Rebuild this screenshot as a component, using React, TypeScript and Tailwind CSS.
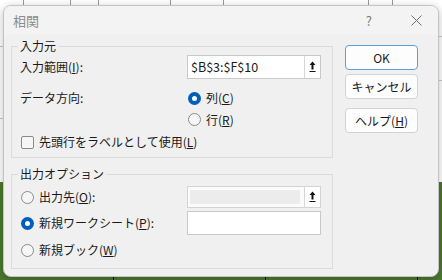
import React from "react";

const font = { fontFamily: '"Noto Sans CJK JP", "Noto Sans", sans-serif' };

function Radio({ checked }: { checked?: boolean }) {
  return checked ? (
    <span className="flex h-[13px] w-[13px] shrink-0 items-center justify-center rounded-full bg-[#005fb8]">
      <span className="h-[5px] w-[5px] rounded-full bg-white" />
    </span>
  ) : (
    <span className="h-[13px] w-[13px] shrink-0 rounded-full border border-[#8a8a8a] bg-[#f6f6f6]" />
  );
}

function RefButton() {
  return (
    <span className="flex h-full w-[16px] items-center justify-center border-l border-[#d6d6d6] bg-white">
      <svg width="7" height="12" viewBox="0 0 7 12">
        <path d="M3.5 0.5 L6.5 4 L4.5 4 L4.5 8.5 L2.5 8.5 L2.5 4 L0.5 4 Z" fill="#111" />
        <rect x="0.5" y="10" width="6" height="1" fill="#111" />
      </svg>
    </span>
  );
}

function Group({ title, height, children }: { title: string; height: number; children: React.ReactNode }) {
  return (
    <div
      className="relative box-border w-[322px] border border-[#dcdcdc]"
      style={{ height }}
    >
      <span className="absolute left-[6px] top-[-9px] bg-[#f0f0f0] px-[2px] text-[12px] leading-[16px] text-[#1a1a1a]">
        {title}
      </span>
      {children}
    </div>
  );
}

function Btn({ children, primary }: { children: React.ReactNode; primary?: boolean }) {
  return (
    <div
      className={
        "flex h-[25px] w-[73px] items-center justify-center rounded-[4px] border bg-[#fdfdfd] text-[12px] text-[#1a1a1a] " +
        (primary ? "border-[#5c9ee0]" : "border-[#d3d3d3]")
      }
    >
      {children}
    </div>
  );
}

export default function App() {
  return (
    <div className="relative h-[280px] w-[442px] overflow-hidden bg-white" style={font}>
      {/* excel behind */}
      <div className="absolute left-0 top-[182px] h-[98px] w-full bg-[#4b792d]" />
      <div className="absolute left-0 top-[46px] h-px w-[4px] bg-[#c8c8c8]" />
      <div className="absolute left-0 top-[118px] h-px w-[4px] bg-[#c8c8c8]" />
      <div className="absolute left-[439px] top-[36px] h-px w-[3px] bg-[#c8c8c8]" />
      <div className="absolute left-[439px] top-[80px] h-px w-[3px] bg-[#c8c8c8]" />
      <div className="absolute left-[113px] top-[276px] h-[4px] w-px bg-black" />
      <div className="absolute left-[265px] top-[276px] h-[4px] w-px bg-black" />
      <div className="absolute left-[417px] top-[276px] h-[4px] w-px bg-black" />
      <div className="absolute left-[23px] top-0 h-[5px] w-px bg-[#999]" />
      <div className="absolute left-[70px] top-0 h-[5px] w-px bg-[#999]" />
      <div className="absolute left-[98px] top-0 h-[5px] w-px bg-[#999]" />
      <div className="absolute left-[170px] top-0 h-[5px] w-px bg-[#999]" />
      <div className="absolute left-[223px] top-0 h-[5px] w-px bg-[#999]" />
      <div className="absolute left-[368px] top-0 h-[5px] w-px bg-[#999]" />
      <div className="absolute left-[392px] top-0 h-[5px] w-px bg-[#999]" />

      {/* dialog */}
      <div className="absolute left-[3px] top-[5px] box-border flex h-[272px] w-[436px] flex-col overflow-hidden rounded-[8px] border border-[#c4c4c4] bg-[#f0f0f0] shadow-[0_2px_8px_rgba(0,0,0,0.25)]">
        <div className="flex h-[29px] shrink-0 items-center bg-[#f3f3f3] pl-[9px] text-[#8c8c8c]">
          <span className="text-[13px]">相関</span>
          <span className="ml-auto mr-[39px] text-[13px] text-[#7a7a7a]">?</span>
          <svg className="mr-[16px]" width="11" height="11" viewBox="0 0 11 11">
            <path d="M0.5 0.5 L10.5 10.5 M10.5 0.5 L0.5 10.5" stroke="#6e6e6e" strokeWidth="1" />
          </svg>
        </div>

        <div className="flex pl-[7px] text-[12px] text-[#1a1a1a]">
          <div className="flex flex-col">
            <div className="mt-[11px]">
              <Group title="入力元" height={112}>
                <div className="flex flex-col pl-[8px]">
                  <div className="mt-[8px] flex h-[24px] items-center">
                    <span className="w-[167px]">
                      入力範囲(<u>I</u>):
                    </span>
                    <div className="box-border flex h-[24px] w-[134px] items-center border border-[#c9c9c9] bg-white">
                      <span className="flex-1 pl-[3px] text-[12.5px]">$B$3:$F$10</span>
                      <RefButton />
                    </div>
                  </div>
                  <div className="mt-[8px] flex h-[22px] items-center">
                    <span className="w-[168px]">データ方向:</span>
                    <Radio checked />
                    <span className="ml-[5px]">
                      列(<u>C</u>)
                    </span>
                  </div>
                  <div className="flex h-[21px] items-center pl-[168px]">
                    <Radio />
                    <span className="ml-[5px]">
                      行(<u>R</u>)
                    </span>
                  </div>
                  <div className="mt-[1px] flex h-[22px] items-center pl-[1px]">
                    <span className="h-[13px] w-[13px] rounded-[2px] border border-[#8a8a8a] bg-[#f6f6f6]" />
                    <span className="ml-[5px]">
                      先頭行をラベルとして使用(<u>L</u>)
                    </span>
                  </div>
                </div>
              </Group>
            </div>
            <div className="mt-[16px]">
              <Group title="出力オプション" height={95}>
                <div className="flex flex-col pl-[9px]">
                  <div className="mt-[11px] flex h-[22px] items-center">
                    <Radio />
                    <span className="ml-[5px] w-[148px]">
                      出力先(<u>O</u>):
                    </span>
                    <div className="box-border flex h-[22px] w-[134px] items-center border border-[#d4d4d4] bg-[#fbfbfb]">
                      <span className="ml-[2px] h-[14px] flex-1 bg-[#ececec]" />
                      <span className="ml-[4px] h-full">
                        <RefButton />
                      </span>
                    </div>
                  </div>
                  <div className="mt-[3px] flex h-[24px] items-center">
                    <Radio checked />
                    <span className="ml-[5px] w-[148px]">
                      新規ワークシート(<u>P</u>):
                    </span>
                    <div className="box-border h-[24px] w-[134px] border border-[#c9c9c9] bg-white" />
                  </div>
                  <div className="mt-[4px] flex h-[22px] items-center">
                    <Radio />
                    <span className="ml-[5px]">
                      新規ブック(<u>W</u>)
                    </span>
                  </div>
                </div>
              </Group>
            </div>
          </div>

          <div className="ml-[12px] mt-[10px] flex flex-col">
            <Btn primary>OK</Btn>
            <div className="mt-[4px]">
              <Btn>キャンセル</Btn>
            </div>
            <div className="mt-[9px]">
              <Btn>
                ヘルプ(<u>H</u>)
              </Btn>
            </div>
          </div>
        </div>
      </div>
    </div>
  );
}
